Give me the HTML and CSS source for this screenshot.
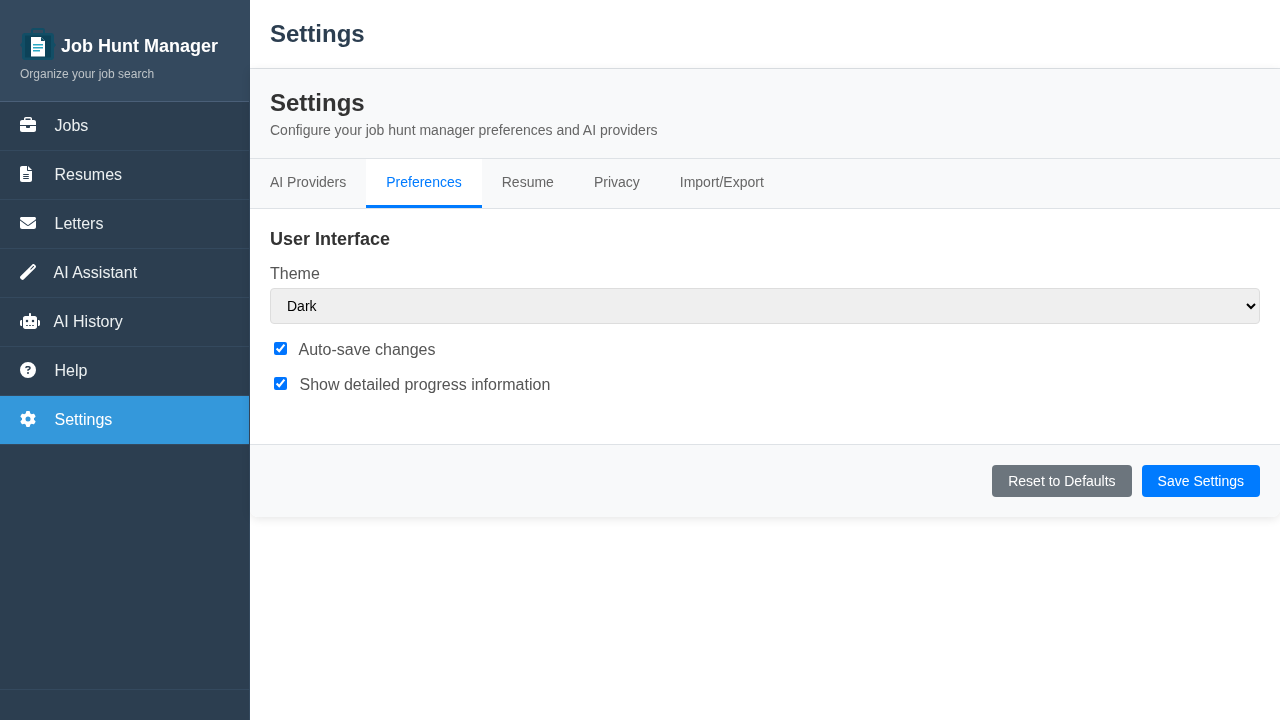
FILE: index.html
```html
<!DOCTYPE html>
<html lang="en">
<head>
    <meta charset="UTF-8">
    <meta name="viewport" content="width=device-width, initial-scale=1.0">
    <title>Job Hunt Manager - Settings</title>
    <link rel="stylesheet" href="styles.css">
</head>
<body>
    <div class="app">
        <aside class="sidebar">
            <div class="sidebar-header">
                <div class="brand">
                    <svg class="brand-logo" viewBox="0 0 36 33" width="36" height="33">
                        <rect x="12" y="1" width="12" height="6" rx="1.500" fill="none" stroke="#124e66" stroke-width="2"/>
                        <path fill="#124e66" d="M5 5h26c1.700 0 3 1.300 3 3v6.500l2 2.500-2 2.500V29c0 1.700-1.300 3-3 3H5c-1.700 0-3-1.300-3-3v-9.500L0 17l2-2.500V8c0-1.700 1.300-3 3-3z"/>
                        <path fill="#0c4258" d="M6 7.500h24c.6 0 1 .4 1 1v20c0 .6-.4 1-1 1H6c-.6 0-1-.4-1-1v-20c0-.6.4-1 1-1z"/>
                        <path fill="#fff" d="M11 9h10l4 4v15.500H11z"/>
                        <path fill="#124e66" d="M21 9l4 4h-4z"/>
                        <path fill="#2aa9c4" d="M13 16h10v1.400H13zM13 19h10v1.400H13zM13 22h7v1.400h-7z"/>
                    </svg>
                    <span class="brand-name">Job Hunt Manager</span>
                </div>
                <div class="brand-tag">Organize your job search</div>
            </div>
            <nav class="nav">
                <a class="nav-item" href="#">
                    <svg class="icon" viewBox="0 0 512 512"><path d="M184 48H328c4.400 0 8 3.600 8 8V96H176V56c0-4.400 3.600-8 8-8zm-56 8V96H64C28.700 96 0 124.700 0 160v96H192 320 512V160c0-35.300-28.700-64-64-64H384V56c0-30.900-25.100-56-56-56H184c-30.900 0-56 25.100-56 56zM512 288H320v32c0 17.700-14.300 32-32 32H224c-17.700 0-32-14.300-32-32V288H0V416c0 35.300 28.700 64 64 64H448c35.300 0 64-28.700 64-64V288z"/></svg>
                    Jobs
                </a>
                <a class="nav-item" href="#">
                    <svg class="icon icon-file" viewBox="0 0 384 512"><path d="M64 0C28.700 0 0 28.700 0 64V448c0 35.300 28.700 64 64 64H320c35.300 0 64-28.700 64-64V160H256c-17.700 0-32-14.300-32-32V0H64zM256 0V128H384L256 0zM112 256H272c8.800 0 16 7.200 16 16s-7.200 16-16 16H112c-8.800 0-16-7.200-16-16s7.200-16 16-16zm0 64H272c8.800 0 16 7.200 16 16s-7.200 16-16 16H112c-8.800 0-16-7.200-16-16s7.200-16 16-16zm0 64H272c8.800 0 16 7.200 16 16s-7.200 16-16 16H112c-8.800 0-16-7.200-16-16s7.200-16 16-16z"/></svg>
                    Resumes
                </a>
                <a class="nav-item" href="#">
                    <svg class="icon" viewBox="0 0 512 512"><path d="M48 64C21.500 64 0 85.500 0 112c0 15.100 7.100 29.300 19.200 38.400L236.800 313.600c11.400 8.500 27 8.500 38.400 0L492.800 150.400c12.100-9.100 19.200-23.300 19.200-38.400c0-26.500-21.500-48-48-48H48zM0 176V384c0 35.300 28.700 64 64 64H448c35.300 0 64-28.700 64-64V176L294.400 339.200c-22.800 17.100-54 17.100-76.800 0L0 176z"/></svg>
                    Letters
                </a>
                <a class="nav-item nav-item-wide" href="#">
                    <svg class="icon" viewBox="0 0 512 512"><path d="M14.100 463.300c-18.700-18.700-18.700-49.100 0-67.900L395.400 14.100c18.700-18.700 49.100-18.700 67.900 0l34.600 34.600c18.700 18.700 18.700 49.100 0 67.900L116.500 497.900c-18.700 18.700-49.100 18.700-67.900 0L14.100 463.300zM347.600 187.600l105.400-105.400L429.400 58.600 324 164l23.600 23.600z"/></svg>
                    AI Assistant
                </a>
                <a class="nav-item nav-item-wide" href="#">
                    <svg class="icon icon-robot" viewBox="0 0 640 512"><path d="M320 0c17.700 0 32 14.300 32 32V96H472c39.800 0 72 32.200 72 72V440c0 39.800-32.200 72-72 72H168c-39.800 0-72-32.200-72-72V168c0-39.800 32.200-72 72-72H288V32c0-17.700 14.300-32 32-32zM208 384c-8.800 0-16 7.200-16 16s7.200 16 16 16h32c8.800 0 16-7.200 16-16s-7.200-16-16-16H208zm96 0c-8.800 0-16 7.200-16 16s7.200 16 16 16h32c8.800 0 16-7.200 16-16s-7.200-16-16-16H304zm96 0c-8.800 0-16 7.200-16 16s7.200 16 16 16h32c8.800 0 16-7.200 16-16s-7.200-16-16-16H400zM264 256a40 40 0 1 0 -80 0 40 40 0 1 0 80 0zm152 40a40 40 0 1 0 0-80 40 40 0 1 0 0 80zM48 224H64V416H48c-26.500 0-48-21.500-48-48V272c0-26.500 21.500-48 48-48zm544 0c26.500 0 48 21.500 48 48v96c0 26.500-21.500 48-48 48H576V224h16z"/></svg>
                    AI History
                </a>
                <a class="nav-item" href="#">
                    <svg class="icon" viewBox="0 0 512 512"><path d="M256 512A256 256 0 1 0 256 0a256 256 0 1 0 0 512zM169.800 165.300c7.900-22.300 29.100-37.300 52.800-37.300h58.300c34.900 0 63.100 28.300 63.100 63.100c0 22.600-12.100 43.500-31.700 54.800L280 264.400c-.2 13-10.900 23.600-24 23.600c-13.300 0-24-10.700-24-24V250.500c0-8.600 4.600-16.500 12.100-20.800l44.300-25.400c4.700-2.700 7.600-7.700 7.600-13.100c0-8.400-6.800-15.100-15.100-15.100H222.600c-3.400 0-6.400 2.100-7.500 5.300l-.4 1.200c-4.400 12.500-18.200 19-30.600 14.600s-19-18.200-14.600-30.600l.4-1.200zM224 352a32 32 0 1 1 64 0 32 32 0 1 1 -64 0z"/></svg>
                    Help
                </a>
                <a class="nav-item active" href="#">
                    <svg class="icon" viewBox="0 0 512 512"><path d="M495.900 166.600c3.200 8.700 .5 18.400-6.400 24.600l-43.300 39.400c1.100 8.300 1.700 16.800 1.700 25.400s-.6 17.100-1.700 25.400l43.300 39.400c6.900 6.200 9.600 15.900 6.400 24.600c-4.400 11.900-9.700 23.300-15.800 34.300l-4.700 8.100c-6.600 11-14 21.400-22.100 31.200c-5.900 7.200-15.700 9.600-24.500 6.800l-55.700-17.700c-13.400 10.300-28.200 18.900-44 25.400l-12.500 57.100c-2 9.100-9 16.300-18.200 17.800c-13.800 2.300-28 3.500-42.500 3.500s-28.700-1.200-42.500-3.500c-9.200-1.500-16.200-8.700-18.200-17.800l-12.500-57.100c-15.800-6.500-30.600-15.100-44-25.400L83.100 425.900c-8.800 2.800-18.600 .3-24.500-6.800c-8.100-9.800-15.500-20.200-22.100-31.200l-4.700-8.100c-6.100-11-11.400-22.400-15.800-34.300c-3.200-8.700-.5-18.400 6.400-24.600l43.300-39.400C64.600 273.100 64 264.600 64 256s.6-17.100 1.700-25.400L22.400 191.200c-6.900-6.200-9.600-15.900-6.400-24.600c4.400-11.900 9.700-23.300 15.800-34.300l4.700-8.100c6.600-11 14-21.400 22.100-31.200c5.900-7.200 15.700-9.600 24.500-6.800l55.700 17.700c13.400-10.300 28.200-18.900 44-25.400l12.500-57.100c2-9.100 9-16.300 18.200-17.800C227.300 1.200 241.500 0 256 0s28.700 1.200 42.500 3.500c9.200 1.500 16.200 8.700 18.200 17.800l12.500 57.100c15.800 6.500 30.600 15.100 44 25.400l55.700-17.700c8.800-2.800 18.600-.3 24.500 6.800c8.100 9.800 15.500 20.200 22.100 31.200l4.700 8.100c6.100 11 11.400 22.400 15.800 34.300zM256 336a80 80 0 1 0 0-160 80 80 0 1 0 0 160z"/></svg>
                    Settings
                </a>
            </nav>
            <div class="sidebar-footer"></div>
        </aside>

        <main class="main">
            <header class="topbar">
                <h1>Settings</h1>
            </header>
            <section class="card">
                <div class="card-head">
                    <h2>Settings</h2>
                    <p>Configure your job hunt manager preferences and AI providers</p>
                </div>
                <div class="tabs">
                    <button class="tab">AI Providers</button>
                    <button class="tab active">Preferences</button>
                    <button class="tab">Resume</button>
                    <button class="tab">Privacy</button>
                    <button class="tab">Import/Export</button>
                </div>
                <div class="tab-body">
                    <h3>User Interface</h3>
                    <label class="field-label" for="theme">Theme</label>
                    <select class="field" id="theme">
                        <option>Dark</option>
                        <option>Light</option>
                        <option>System</option>
                    </select>
                    <label class="check">
                        <input type="checkbox" checked>
                        <span>Auto-save changes</span>
                    </label>
                    <label class="check">
                        <input type="checkbox" checked>
                        <span class="check-text-wide">Show detailed progress information</span>
                    </label>
                </div>
                <div class="card-foot">
                    <button class="btn btn-grey">Reset to Defaults</button>
                    <button class="btn btn-blue">Save Settings</button>
                </div>
            </section>
        </main>
    </div>
</body>
</html>
```

FILE: styles.css
```css
* {
    box-sizing: border-box;
}

body {
    margin: 0;
    font-family: "Liberation Sans", Arial, sans-serif;
    background-color: #fff;
    overflow: hidden;
}

.app {
    display: flex;
    height: 720px;
    will-change: transform;
}

/* sidebar */
.sidebar {
    width: 250px;
    flex-shrink: 0;
    display: flex;
    flex-direction: column;
    background-color: #2c3e50;
    color: #fff;
    border-right: 1px solid #34495e;
}

.sidebar-header {
    height: 102px;
    padding: 28px 20px 0;
    background-color: #34495e;
    border-bottom: 1px solid #4a5f78;
}

.brand {
    display: flex;
    align-items: center;
    gap: 5px;
    height: 36px;
}

.brand-name {
    font-size: 18px;
    font-weight: 700;
    white-space: nowrap;
}

.brand-logo {
    flex-shrink: 0;
    align-self: flex-start;
}

.brand-tag {
    margin-top: 2px;
    font-size: 12px;
    line-height: 16px;
    color: #bdc3c7;
}

.nav {
    flex: 1;
}

.nav-item {
    display: flex;
    align-items: center;
    height: 49px;
    padding-left: 20px;
    font-size: 16px;
    color: #ecf0f1;
    text-decoration: none;
    border-bottom: 1px solid #34495e;
}

.nav-item.active {
    background-color: #3498db;
    color: #fff;
}

.icon {
    width: 16px;
    height: 16px;
    margin-top: -2px;
    margin-right: 18.500px;
    fill: #fff;
    flex-shrink: 0;
}

.icon-file {
    width: 12px;
    margin-right: 22.500px;
}

.nav-item-wide .icon {
    margin-right: 17.500px;
}

.nav-item-wide .icon-robot {
    width: 20px;
    margin-right: 13.500px;
}

.sidebar-footer {
    height: 31px;
    border-top: 1px solid #34495e;
}

/* main area */
.main {
    flex: 1;
    min-width: 0;
}

.topbar {
    height: 69px;
    padding: 0 20px;
    display: flex;
    align-items: center;
    border-bottom: 1px solid #dee2e6;
}

.topbar h1 {
    margin: 0;
    font-size: 24px;
    font-weight: 700;
    color: #2c3e50;
}

.card {
    height: 448px;
    border-radius: 0 0 8px 8px;
    box-shadow: 0 2px 10px rgba(0, 0, 0, 0.1);
    overflow: hidden;
}

.card-head {
    height: 90px;
    padding: 20px 20px 0;
    background-color: #f8f9fa;
    border-bottom: 1px solid #dee2e6;
}

.card-head h2 {
    margin: 0 0 4px;
    font-size: 24px;
    line-height: 28px;
    font-weight: 700;
    color: #333;
}

.card-head p {
    margin: 0;
    font-size: 14px;
    line-height: 18px;
    color: #666;
}

.tabs {
    display: flex;
    height: 50px;
    background-color: #f8f9fa;
    border-bottom: 1px solid #dee2e6;
}

.tab {
    height: 49px;
    padding: 0 20px;
    font-family: inherit;
    font-size: 14px;
    color: #666;
    background: none;
    border: none;
    border-bottom: 3px solid transparent;
}

.tab.active {
    color: #007bff;
    background-color: #fff;
    border-bottom-color: #007bff;
}

.tab-body {
    height: 235px;
    padding: 20px;
}

.tab-body h3 {
    margin: 0 0 14px;
    font-size: 18px;
    line-height: 21px;
    font-weight: 700;
    color: #333;
}

.field-label {
    display: block;
    margin-bottom: 4px;
    font-size: 16px;
    line-height: 20px;
    color: #555;
}

.field {
    display: block;
    width: 100%;
    height: 36px;
    padding: 8px 12px;
    font-family: inherit;
    font-size: 14px;
    color: #000;
    background-color: #efefef;
    border: 1px solid #ddd;
    border-radius: 4px;
}

.check {
    display: flex;
    align-items: center;
    height: 35px;
    font-size: 16px;
    color: #555;
}

.field + .check {
    margin-top: 9px;
}

.check span {
    margin-top: -2px;
}

.check input {
    margin: -5px 11.500px 0 4px;
    width: 13px;
    height: 13px;
    accent-color: #0075ff;
}

.check-text-wide {
    margin-left: 1px;
}

.card-foot {
    display: flex;
    justify-content: flex-end;
    gap: 10px;
    height: 73px;
    padding: 20px;
    background-color: #f8f9fa;
    border-top: 1px solid #dee2e6;
}

.btn {
    height: 32px;
    padding: 0 16px;
    font-family: inherit;
    font-size: 14px;
    color: #fff;
    border: none;
    border-radius: 4px;
}

.btn-grey {
    background-color: #6c757d;
}

.btn-blue {
    background-color: #007bff;
}
```
